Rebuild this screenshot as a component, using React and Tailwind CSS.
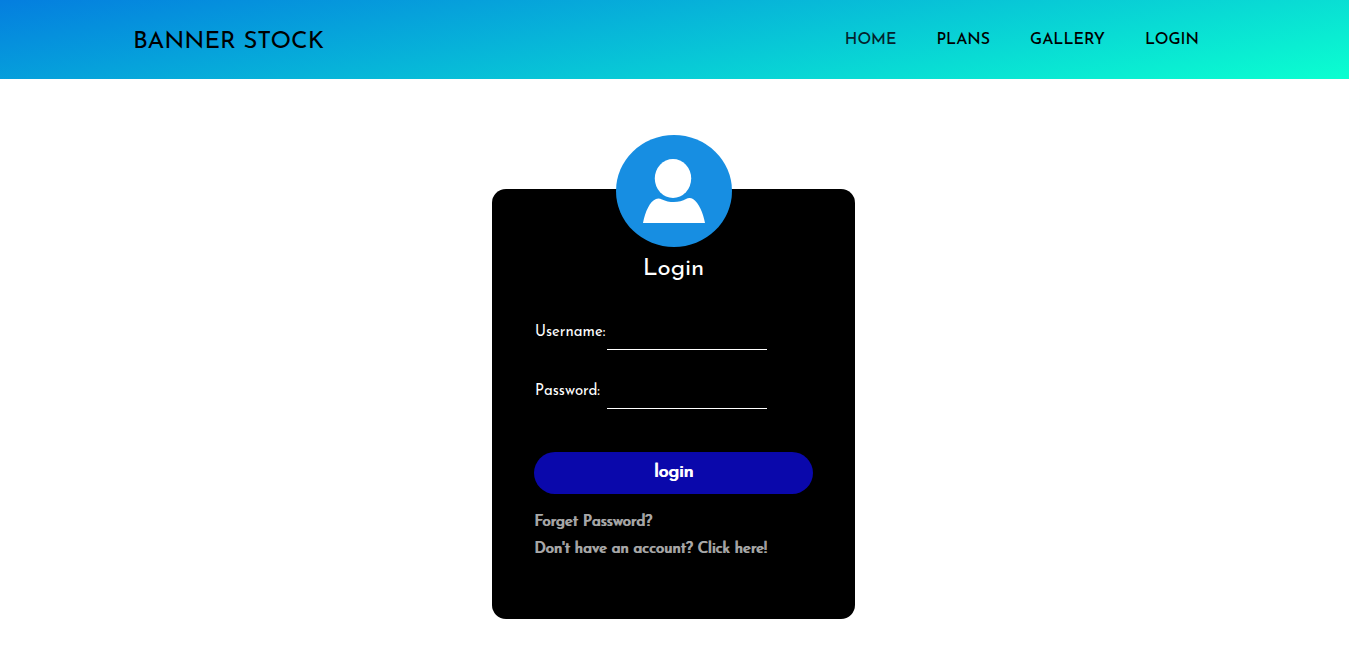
const links = ['HOME', 'PLANS', 'GALLERY', 'LOGIN'];

function Header() {
  return (
    <header className="flex h-[79px] items-center justify-between bg-[linear-gradient(170deg,#047edf,#0bffd0)] pl-[133px] pr-[150px] text-black">
      <a href="#" className="pt-1 text-2xl">BANNER STOCK</a>
      <nav className="flex gap-10 text-base font-medium">
        {links.map((name) => (
          <a key={name} href="#" className={name === 'HOME' ? 'text-[#04222c]' : 'text-black'}>{name}</a>
        ))}
      </nav>
    </header>
  );
}

function Avatar() {
  return (
    <svg viewBox="0 0 116 112" className="absolute -top-[54px] left-1/2 h-[112px] w-[116px] -translate-x-1/2" aria-hidden="true">
      <ellipse cx="58" cy="56" rx="58" ry="56" fill="#178ee2" />
      <ellipse cx="57" cy="43.5" rx="18.2" ry="19.5" fill="#fff" />
      <path d="M27 88C29 77 34 66 40 64C42 63 44 63.500 46 64.500C53 68 64 68 70 64C72 62.700 75 62.700 77 64C83 68 87 78 89 88Z" fill="#fff" />
    </svg>
  );
}

function Field({ id, label, type }) {
  return (
    <div className="flex h-[59px] items-start">
      <label htmlFor={id} className="w-[73px] pl-px pt-[7px] text-[15px] leading-5 whitespace-nowrap">{label}</label>
      <input id={id} type={type} className="h-[34px] w-40 border-b border-white bg-transparent text-base text-white outline-none" />
    </div>
  );
}

export default function App() {
  return (
    <div className="min-h-screen bg-white font-['Josefin_Sans',Lato,sans-serif]">
      <Header />
      <main className="flex justify-center pr-0.5 pt-[110px] pb-9">
        <section className="relative w-[363px] rounded-[14px] bg-black px-[42px] pb-14 pt-16 text-white">
          <Avatar />
          <h1 className="text-center text-2xl leading-8">Login</h1>
          <form className="pt-[31px]" onSubmit={(e) => e.preventDefault()}>
            <Field id="username" label="Username:" type="text" />
            <Field id="password" label="Password:" type="password" />
            <button type="submit" className="mt-[18px] h-[42px] w-full rounded-full bg-[#0a08ab] text-lg text-white [text-shadow:1px_0_currentColor]">login</button>
          </form>
          <div className="flex flex-col items-start pt-[15px] text-[15px] leading-[27px] text-[#a9a9a9] [text-shadow:1px_0_currentColor]">
            <a href="#">Forget Password?</a>
            <a href="#">Don't have an account? Click here!</a>
          </div>
        </section>
      </main>
    </div>
  );
}
